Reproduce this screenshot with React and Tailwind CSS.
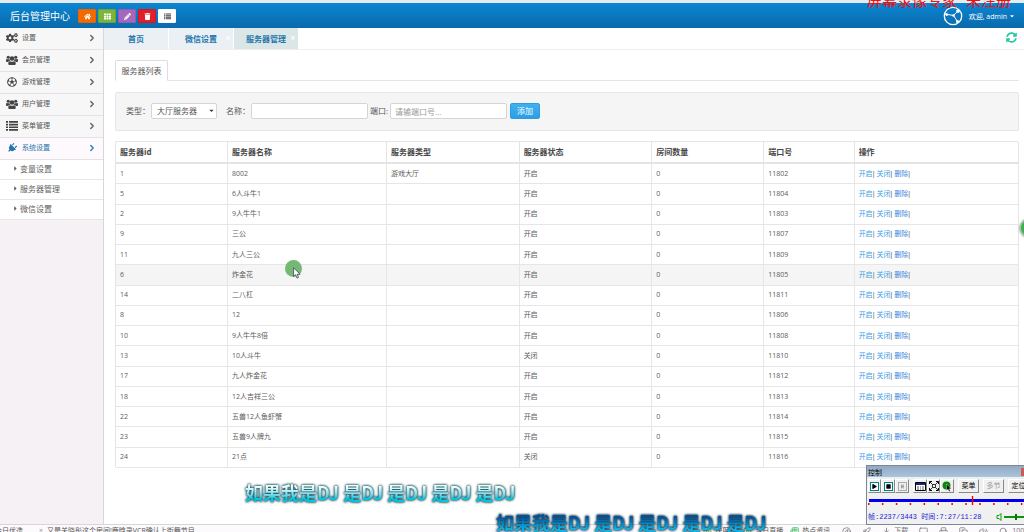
import React, { useState } from 'react';
import {
    FaHome, FaTh, FaPencilAlt, FaTrash, FaCogs, FaRegFutbol, FaPlug,
    FaCaretRight, FaCaretDown, FaSyncAlt, FaPlay, FaStop, FaStepForward,
} from 'react-icons/fa';
import {
    Rocket, Download, Monitor, Printer, Copy, Volume2, Search, Compass, SquarePlay, Newspaper, ChevronRight,
} from 'lucide-react';

const GroupIcon = ({ className }) => (
    <svg viewBox="0 0 24 20" className={className} fill="currentColor">
        <circle cx="4.500" cy="4.500" r="3.200" />
        <circle cx="19.500" cy="4.500" r="3.200" />
        <circle cx="12" cy="7" r="4.600" />
        <path d="M0 13V9.500C0 8 1 7.500 2 8c1.500.8 3.300.8 5 0 .1 1.800.6 3 1.600 4C6.500 12 5 12.300 4 14H2c-1.200 0-2-.4-2-1z" />
        <path d="M24 13V9.500C24 8 23 7.500 22 8c-1.500.8-3.300.8-5 0-.1 1.800-.6 3-1.600 4 2.100 0 3.600.3 4.600 2h2c1.200 0 2-.4 2-1z" />
        <path d="M4.500 17c0-3 1.500-4.700 3.500-4.700 2.500 1.800 5.500 1.800 8 0 2 0 3.500 1.700 3.500 4.700 0 2-1 3-3 3h-9c-2 0-3-1-3-3z" />
    </svg>
);

const ListIcon = ({ className }) => (
    <svg viewBox="0 0 12 10" className={className} fill="currentColor">
        <path d="M0 0h2v1.700H0zM3 0h9v1.700H3zM0 2.700h2v1.700H0zM3 2.700h9v1.700H3zM0 5.400h2v1.700H0zM3 5.400h9v1.700H3zM0 8.100h2v1.700H0zM3 8.100h9v1.700H3z" />
    </svg>
);

const PlugIcon = ({ className }) => <FaPlug className={`rotate-45 ${className}`} />;

const shortcuts = [
    { label: '首页', icon: FaHome, color: 'bg-[#f56a00] border-[#e86400] text-white' },
    { label: '表格', icon: FaTh, color: 'bg-[#7cb53a] border-[#6da52e] text-white' },
    { label: '编辑', icon: FaPencilAlt, color: 'bg-[#a467bd] border-[#975bb0] text-white' },
    { label: '删除', icon: FaTrash, color: 'bg-[#df1f2a] border-[#cf1822] text-white' },
    { label: '列表', icon: ListIcon, color: 'bg-white border-white text-[#444]' },
];

const menu = [
    { name: '设置', icon: FaCogs },
    { name: '会员管理', icon: GroupIcon },
    { name: '游戏管理', icon: FaRegFutbol },
    { name: '用户管理', icon: GroupIcon },
    { name: '菜单管理', icon: ListIcon },
    { name: '系统设置', icon: PlugIcon, children: ['变量设置', '服务器管理', '微信设置'] },
];

const servers = [
    { id: 1, name: '8002', type: '游戏大厅', status: '开启', port: 11802 },
    { id: 5, name: '6人斗牛1', status: '开启', port: 11804 },
    { id: 2, name: '9人牛牛1', status: '开启', port: 11803 },
    { id: 9, name: '三公', status: '开启', port: 11807 },
    { id: 11, name: '九人三公', status: '开启', port: 11809 },
    { id: 6, name: '炸金花', status: '开启', port: 11805 },
    { id: 14, name: '二八杠', status: '开启', port: 11811 },
    { id: 8, name: '12', status: '开启', port: 11806 },
    { id: 10, name: '9人牛牛8倍', status: '开启', port: 11808 },
    { id: 13, name: '10人斗牛', status: '关闭', port: 11810 },
    { id: 17, name: '九人炸金花', status: '开启', port: 11812 },
    { id: 18, name: '12人吉祥三公', status: '开启', port: 11813 },
    { id: 22, name: '五兽12人鱼虾蟹', status: '开启', port: 11814 },
    { id: 23, name: '五兽9人牌九', status: '开启', port: 11815 },
    { id: 24, name: '21点', status: '关闭', port: 11816 },
];

const columns = [
    { title: '服务器id', width: 'w-[12.4%]' },
    { title: '服务器名称', width: 'w-[17.6%]' },
    { title: '服务器类型', width: 'w-[14.7%]' },
    { title: '服务器状态', width: 'w-[14.7%]' },
    { title: '房间数量', width: 'w-[12.4%]' },
    { title: '端口号', width: 'w-[10%]' },
    { title: '操作', width: 'w-[18.2%]' },
];

const Header = () => (
    <header className="h-[28px] shrink-0 flex items-center pt-px pl-[10px] pr-[9px] border-t-3 border-[#e6ebee] bg-linear-to-b from-[#0b86d2] to-[#0a6aab] text-white">
        <h1 className="text-[10px] leading-none mr-[8px]">后台管理中心</h1>
        <div className="flex gap-[2px]">
            {shortcuts.map(({ label, icon: Icon, color }) => (
                <button key={label} aria-label={label} className={`w-[18px] h-[14px] rounded-[1px] border flex items-center justify-center ${color}`}>
                    <Icon className="w-[7px] h-[7px]" />
                </button>
            ))}
        </div>
        <div className="ml-auto flex items-center gap-[6px]">
            <svg viewBox="0 0 20 20" className="w-[20px] h-[20px]" fill="none" stroke="white" strokeWidth="1.3">
                <circle cx="10" cy="10" r="8.7" />
                <path d="M2 8 L10.500 9.500 L15 5 M10.500 9.500 L14.500 15.500" strokeWidth="1" />
                <circle cx="3.800" cy="8.600" r=".8" fill="white" />
                <circle cx="10.500" cy="9.500" r=".6" fill="white" />
                <circle cx="15" cy="5" r="1.200" fill="white" />
                <circle cx="14.500" cy="15.500" r=".9" fill="white" />
            </svg>
            <button className="flex items-center gap-[2px] text-[7px] leading-none">
                欢迎, admin <FaCaretDown className="w-[6px] h-[6px]" />
            </button>
        </div>
    </header>
);

const Sidebar = () => (
    <aside className="w-[104px] shrink-0 bg-[#f5f1f5] border-r border-[#d9d5d9]">
        <ul>
            {menu.map(({ name, icon: Icon, children }) => (
                <li key={name}>
                    <a href="#" className={`h-[22px] flex items-center pl-[6px] pr-[6px] pb-px border-b border-[#e4e2e4] text-[7px] ${children ? 'bg-[#fdf9fd] text-[#2577ac]' : 'bg-[#f7f7f7] text-[#585858]'}`}>
                        <Icon className={`w-[12px] h-[10px] mr-[4px] ${children ? '' : 'text-[#444]'}`} />
                        {name}
                        <ChevronRight className="ml-auto w-[10px] h-[10px]" strokeWidth="3" />
                    </a>
                    {children && (
                        <ul>
                            {children.map(child => (
                                <li key={child}>
                                    <a href="#" className="h-[20px] flex items-center pl-[13px] pb-[2px] bg-white border-b border-[#e6e6e6] text-[8px] text-[#616161]">
                                        <FaCaretRight className="w-[5px] h-[7px] mr-[2px]" />
                                        {child}
                                    </a>
                                </li>
                            ))}
                        </ul>
                    )}
                </li>
            ))}
        </ul>
    </aside>
);

const PageTabs = ({ active, setActive }) => (
    <div className="h-[22px] flex border-b border-[#eeeeee] bg-white text-[8px] font-bold text-[#2577ac]">
        {['首页', '微信设置', '服务器管理'].map((tab, i) => (
            <button
                key={tab}
                onClick={() => setActive(tab)}
                className={`w-[65px] h-[21px] flex items-center justify-center relative border-r border-white ${active === tab ? 'bg-[#dbe6e7]' : 'bg-[#ebf0f5]'}`}
            >
                {tab}
                {i > 0 && <span className="absolute right-[3px] top-[6px] leading-none text-white">×</span>}
            </button>
        ))}
        <button aria-label="刷新" className="ml-auto mr-[7px] mb-[2px] flex items-center text-[#22c8a0]">
            <FaSyncAlt className="w-[11px] h-[11px]" />
        </button>
    </div>
);

const SearchForm = () => {
    const [type, setType] = useState('大厅服务器');
    const [name, setName] = useState('');
    const [port, setPort] = useState('');

    return (
        <form onSubmit={(e) => e.preventDefault()} className="mt-[11px] h-[39px] flex items-center pl-[10px] pb-px bg-[#f5f5f5] border border-[#e7e3e6] rounded-[2px] text-[8px] text-[#555]">
            <label htmlFor="type">类型：</label>
            <div className="relative ml-[1px] mr-[9px]">
                <select id="type" value={type} onChange={(e) => setType(e.target.value)} className="appearance-none block w-[66px] h-[16px] pl-[5px] bg-white border border-[#d5d5d5] rounded-[2px]">
                    <option>大厅服务器</option>
                    <option>游戏服务器</option>
                </select>
                <FaCaretDown className="absolute right-[3px] top-[4px] w-[5px] h-[7px] text-[#333] pointer-events-none" />
            </div>
            <label htmlFor="name">名称：</label>
            <input id="name" type="text" value={name} onChange={(e) => setName(e.target.value)} className="ml-[1px] mr-[2px] w-[117px] h-[16px] px-[4px] bg-white border border-[#d5d5d5] rounded-[2px]" />
            <label htmlFor="port">端口:</label>
            <input id="port" type="text" placeholder="请输端口号..." value={port} onChange={(e) => setPort(e.target.value)} className="ml-[2px] mr-[3px] w-[117px] h-[16px] px-[4px] bg-white border border-[#d5d5d5] rounded-[2px] placeholder:text-[#999]" />
            <button type="submit" className="w-[30px] h-[16px] rounded-[2px] bg-linear-to-b from-[#40b0f0] to-[#2c9fe4] border border-[#2d9bdc] text-white leading-none">添加</button>
        </form>
    );
};

const ServerTable = () => (
    <table className="mt-[10px] w-full h-[327px] table-fixed border-separate border-spacing-0 border-t border-l border-[#e4e4e4] rounded-[2px] text-[7px] leading-[10px] text-left text-[#5c5c5c]">
        <thead>
            <tr className="text-[8px] text-[#484848]">
                {columns.map(col => (
                    <th key={col.title} className={`${col.width} h-[22px] px-[4px] border-r border-b-2 border-[#e4e4e4]`}>{col.title}</th>
                ))}
            </tr>
        </thead>
        <tbody>
            {servers.map(server => (
                <tr key={server.id} className={server.id === 6 ? 'bg-[#f5f5f5]' : 'bg-white hover:bg-[#f5f5f5]'}>
                    {[server.id, server.name, server.type, server.status, 0, server.port].map((value, i) => (
                        <td key={i} className="px-[4px] border-r border-b border-[#e6e6e6]">{value}</td>
                    ))}
                    <td className="px-[4px] border-r border-b border-[#e6e6e6] font-['Liberation_Sans','Noto_Sans_CJK_SC',sans-serif]">
                        <a href="#" className="text-[#38a0e6]">开启</a>|{' '}
                        <a href="#" className="text-[#38a0e6]">关闭</a>|{' '}
                        <a href="#" className="text-[#3b87dc]">删除</a>|
                    </td>
                </tr>
            ))}
        </tbody>
    </table>
);

const StatusBar = () => (
    <footer className="h-[8px] shrink-0 overflow-hidden bg-[#fdfafd] border-t border-[#d8d5d8] text-[7px] text-[#555]">
        <div className="flex items-center pt-[1px] -mr-[6px] leading-[10px] whitespace-nowrap">
            <span className="-ml-[5px]">今日优选</span>
            <span className="ml-[16px] text-[#999]">×</span>
            <span className="ml-[4px]">又是关晓彤这个房间!鹿晗录VCR确认上街舞节目</span>
            <div className="ml-auto flex items-center gap-[3px]">
                <SquarePlay className="w-[9px] h-[9px] text-[#22b14c]" />
                <span>快剪辑</span>
                <SquarePlay className="ml-[4px] w-[9px] h-[9px] text-[#22b14c]" />
                <span>今日直播</span>
                <Newspaper className="ml-[4px] w-[9px] h-[9px] text-[#22b14c]" />
                <span>热点资讯</span>
            </div>
            <div className="ml-[12px] flex items-center gap-[11px] text-[#777]">
                <Compass className="w-[9px] h-[9px]" />
                <Rocket className="w-[9px] h-[9px]" />
                <span className="flex items-center gap-[3px]"><Download className="w-[9px] h-[9px]" />下载</span>
                <Monitor className="w-[9px] h-[9px]" />
                <Printer className="w-[9px] h-[9px]" />
                <Copy className="w-[9px] h-[9px]" />
                <Volume2 className="w-[9px] h-[9px]" />
                <span className="flex items-center gap-[4px]"><Search className="w-[9px] h-[9px]" />100%</span>
            </div>
        </div>
    </footer>
);

const PanelButton = ({ label, children, className = '' }) => (
    <button aria-label={label} className={`h-[14px] shrink-0 flex items-center justify-center bg-[#f0f0f0] border border-t-white border-l-white border-b-[#888] border-r-[#888] ${className}`}>
        {children}
    </button>
);

// Playback control window of the screen recorder, floats over the page
const ControlPanel = () => (
    <section className="absolute left-[866px] right-0 top-[465px] h-[60px] overflow-hidden bg-[#f0f0f0] border border-r-0 border-[#77899a] text-[7px] text-black">
        <div className="h-[11px] flex items-center justify-between pt-px pl-[1px] leading-none bg-linear-to-b from-[#93a9bf] to-[#a9c5e0]">
            <span>控制</span>
            <button aria-label="关闭" className="w-[3px] h-[8px] bg-[#cf5b50]"></button>
        </div>
        <div className="mt-[2px] flex pl-[1px]">
            <PanelButton label="播放" className="w-[13px]"><span className="p-[1px] border border-[#008080] bg-white"><FaPlay className="w-[5px] h-[5px]" /></span></PanelButton>
            <PanelButton label="停止" className="w-[14px]"><span className="p-[1px] border border-[#008080] bg-white"><FaStop className="w-[5px] h-[5px]" /></span></PanelButton>
            <PanelButton label="下一帧" className="w-[14px] text-[#999]"><span className="p-[1px] border border-[#aaa]"><FaStepForward className="w-[5px] h-[5px]" /></span></PanelButton>
            <PanelButton label="窗口" className="w-[14px] ml-[4px]">
                <svg viewBox="0 0 11 9" className="w-[11px] h-[9px]">
                    <path d="M.5 .5h10v8H.5z" fill="white" stroke="black" />
                    <path d="M1 1h9v2H1z" fill="#202080" />
                    <path d="M2 5h2M5 5h1M7 5h2M2 7h2M5 7h1M7 7h2" stroke="#555" />
                </svg>
            </PanelButton>
            <PanelButton label="全屏" className="w-[13px]">
                <svg viewBox="0 0 10 10" className="w-[10px] h-[10px]" fill="none" stroke="black">
                    <path d="M.5 3V.5H3M7 .5h2.500V3M9.500 7v2.500H7M3 9.500H.5V7" />
                    <path d="M1 1l2.500 2.500M9 1L6.500 3.500M9 9L6.500 6.500M1 9l2.500-2.500M3.500 3.500h3v3h-3z" strokeWidth=".8" />
                </svg>
            </PanelButton>
            <PanelButton label="光标" className="w-[14px] bg-[#e2e2e2]">
                <svg viewBox="0 0 11 11" className="w-[11px] h-[11px]">
                    <circle cx="4.5" cy="4.5" r="4" fill="#0a8a0a" />
                    <path d="M4.5 3v6.5l1.6-1.3 1 2.3 1.2-.6-1-2.1h2z" fill="black" stroke="white" strokeWidth=".4" />
                </svg>
            </PanelButton>
            <PanelButton label="菜单" className="w-[21px] ml-[4px]">菜单</PanelButton>
            <PanelButton label="多节" className="w-[21px] ml-[4px] text-[#999]">多节</PanelButton>
            <PanelButton label="定位" className="w-[21px] ml-[4px]">定位</PanelButton>
        </div>
        <svg viewBox="0 0 157 10" className="block mt-[3px] w-[157px] h-[10px]">
            <path d="M2 4.500h155" stroke="#0000f0" strokeWidth="3" />
            <path d="M1 8h156" stroke="red" strokeWidth="2" strokeDasharray="1.500 12.400" />
            <path d="M105.500 0v9" stroke="red" strokeWidth="1.4" />
        </svg>
        <div className="mt-[5px] flex items-center pl-[1px] leading-[12px]">
            <span className="font-['Liberation_Mono','Noto_Sans_CJK_SC',monospace] text-[#2020d8] whitespace-nowrap">帧:2237/3443 时间:7:27/11:28</span>
            <svg viewBox="0 0 28 10" className="ml-auto w-[28px] h-[10px]">
                <path d="M1 3.500h2l2-2v7l-2-2H1z" fill="none" stroke="#0aa00a" />
                <path d="M8 5h20" stroke="#0a960a" strokeWidth="2" />
                <path d="M20 2v6" stroke="#0a760a" strokeWidth="2" />
            </svg>
        </div>
    </section>
);

const lyric = '如果我是DJ 是DJ 是DJ 是DJ 是DJ';

const App = () => {
    const [activeTab, setActiveTab] = useState('服务器管理');

    return (
        <div lang="zh-CN" className="relative h-screen flex flex-col overflow-hidden bg-[#ececec] font-['Open_Sans','Noto_Sans_CJK_SC',sans-serif]">
            <Header />
            <div className="flex-1 min-h-0 flex">
                <Sidebar />
                <main className="flex-1 min-w-0 bg-white">
                    <PageTabs active={activeTab} setActive={setActiveTab} />
                    <div className="pl-[11px] pr-[5px] pt-[10px]">
                        <div className="flex border-b border-[#e9e2e6]">
                            <button className="h-[21px] w-[53px] -mb-px bg-white border border-b-white border-[#e0dde0] rounded-t-[2px] text-[8px] text-[#555]">服务器列表</button>
                        </div>
                        <SearchForm />
                        <ServerTable />
                    </div>
                </main>
            </div>
            <StatusBar />

            <div className="absolute right-[13px] -top-[6px] text-[15px] leading-[18px] text-[#f01010] font-['Liberation_Mono','Noto_Sans_CJK_SC',monospace] whitespace-pre">屏幕录像专家 未注册</div>
            <div className="absolute -right-[15px] top-[218px] w-[20px] h-[20px] rounded-full bg-[#35b44a] border-2 border-[#b5bdb5] shadow"></div>
            <div className="absolute left-[285px] top-[260px] w-[17px] h-[17px] rounded-full bg-[#73b873]"></div>
            <svg viewBox="0 0 8 12" className="absolute left-[293px] top-[267px] w-[8px] h-[12px]">
                <path d="M.6 .8v8.700l2-1.800 1.400 3.400 1.500-.7L4.100 7.200h3z" fill="white" stroke="#4a5560" strokeWidth=".9" />
            </svg>
            <p className="absolute left-[245px] top-[480px] text-[18px] leading-[24px] whitespace-nowrap font-['Noto_Sans_CJK_SC',sans-serif] font-bold text-transparent bg-clip-text bg-linear-to-b from-[#e6ffff] from-30% to-[#00c8e0] to-75% [filter:drop-shadow(0_0_1px_#2a5560)_drop-shadow(0_0_1px_#2a5560)]">{lyric}</p>
            <p className="absolute left-[496px] top-[510px] text-[18px] leading-[24px] whitespace-nowrap font-['Noto_Sans_CJK_SC',sans-serif] font-bold text-transparent bg-clip-text bg-linear-to-b from-[#07509a] from-30% to-[#12b4e6] to-80% [filter:drop-shadow(0_0_1px_#1c4254)_drop-shadow(0_0_1px_#1c4254)]">{lyric}</p>
            <ControlPanel />
        </div>
    );
};

export default App;
